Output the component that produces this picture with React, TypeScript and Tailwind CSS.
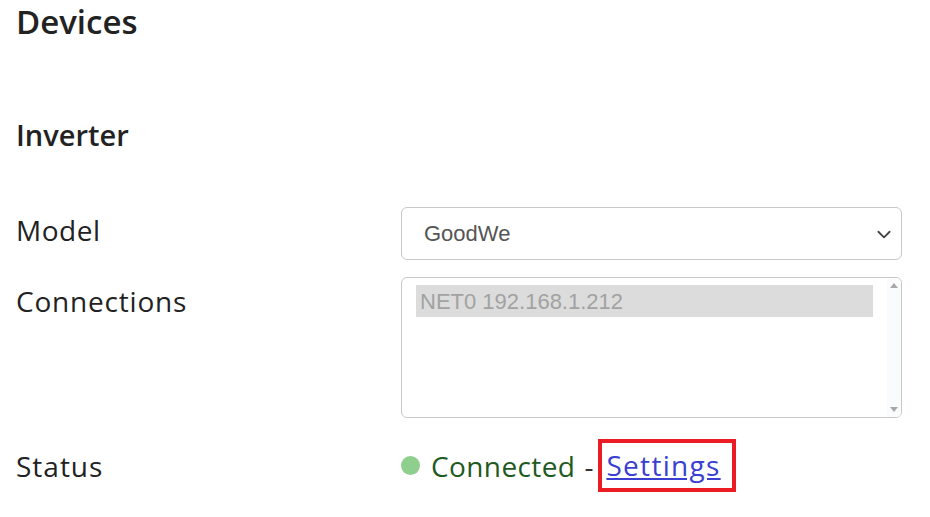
import React from "react";

export default function App() {
  const ui = { fontFamily: "'Open Sans', Lato, sans-serif" };
  const arial = { fontFamily: "'Liberation Sans', Arial, sans-serif" };
  return (
    <div className="w-[930px] h-[517px] bg-white overflow-hidden px-4 text-[#222]" style={ui}>
      <h1 className="text-[33px] font-semibold leading-[40px] pt-[2px] text-[#222]">Devices</h1>
      <h2 className="text-[29px] font-semibold leading-[36px] mt-[75px] text-[#222]">Inverter</h2>

      <div className="mt-[54px] flex items-start">
        <div className="w-[385px] text-[28px] tracking-[0.5px] text-[#222] pt-[2px]">Model</div>
        <div className="w-[501px] h-[53px] border border-[#c8c8c8] rounded-[6px] flex items-center justify-between pl-[22px] pr-[8px]">
          <span className="text-[22px] text-[#555]" style={arial}>GoodWe</span>
          <svg width="18" height="18" viewBox="0 0 16 16" fill="none" stroke="#444" strokeWidth="1.6" strokeLinecap="round" strokeLinejoin="round">
            <path d="M3 6l5 5 5-5" />
          </svg>
        </div>
      </div>

      <div className="mt-[17px] flex items-start">
        <div className="w-[385px] text-[28px] tracking-[0.8px] text-[#222] pt-[3px]">Connections</div>
        <div className="w-[501px] h-[141px] border border-[#c8c8c8] rounded-[6px] flex overflow-hidden">
          <div className="flex-1 pl-[14px] pt-[7px] pr-[14px]">
            <div className="h-[32px] bg-[#dcdcdc] flex items-center pl-[4px] text-[22px] text-[#a2a2a2]" style={arial}>
              NET0 192.168.1.212
            </div>
          </div>
          <div className="w-[14px] bg-[#fafbfd] flex flex-col justify-between items-center py-[5px]">
            <svg width="8" height="5" viewBox="0 0 8 5"><path d="M0 5L4 0L8 5Z" fill="#a8a8a8" /></svg>
            <svg width="8" height="5" viewBox="0 0 8 5"><path d="M0 0L8 0L4 5Z" fill="#a8a8a8" /></svg>
          </div>
        </div>
      </div>

      <div className="mt-[21px] flex items-center">
        <div className="w-[385px] text-[28px] tracking-[1px] text-[#222]">Status</div>
        <div className="flex items-center text-[28px]">
          <span className="w-[19px] h-[19px] rounded-full bg-[#8ecf8e] mr-[11px]"></span>
          <span className="text-[#1f5a1f] tracking-[0.4px]">Connected</span>
          <span className="text-[#333] ml-[9px] mr-[5px]">-</span>
          <span className="border-4 border-[#ec1c24] pl-[4px] pr-[11px] leading-[45px]">
            <a href="#" className="text-[#3a3fd0] underline tracking-[1.3px]">Settings</a>
          </span>
        </div>
      </div>
    </div>
  );
}
